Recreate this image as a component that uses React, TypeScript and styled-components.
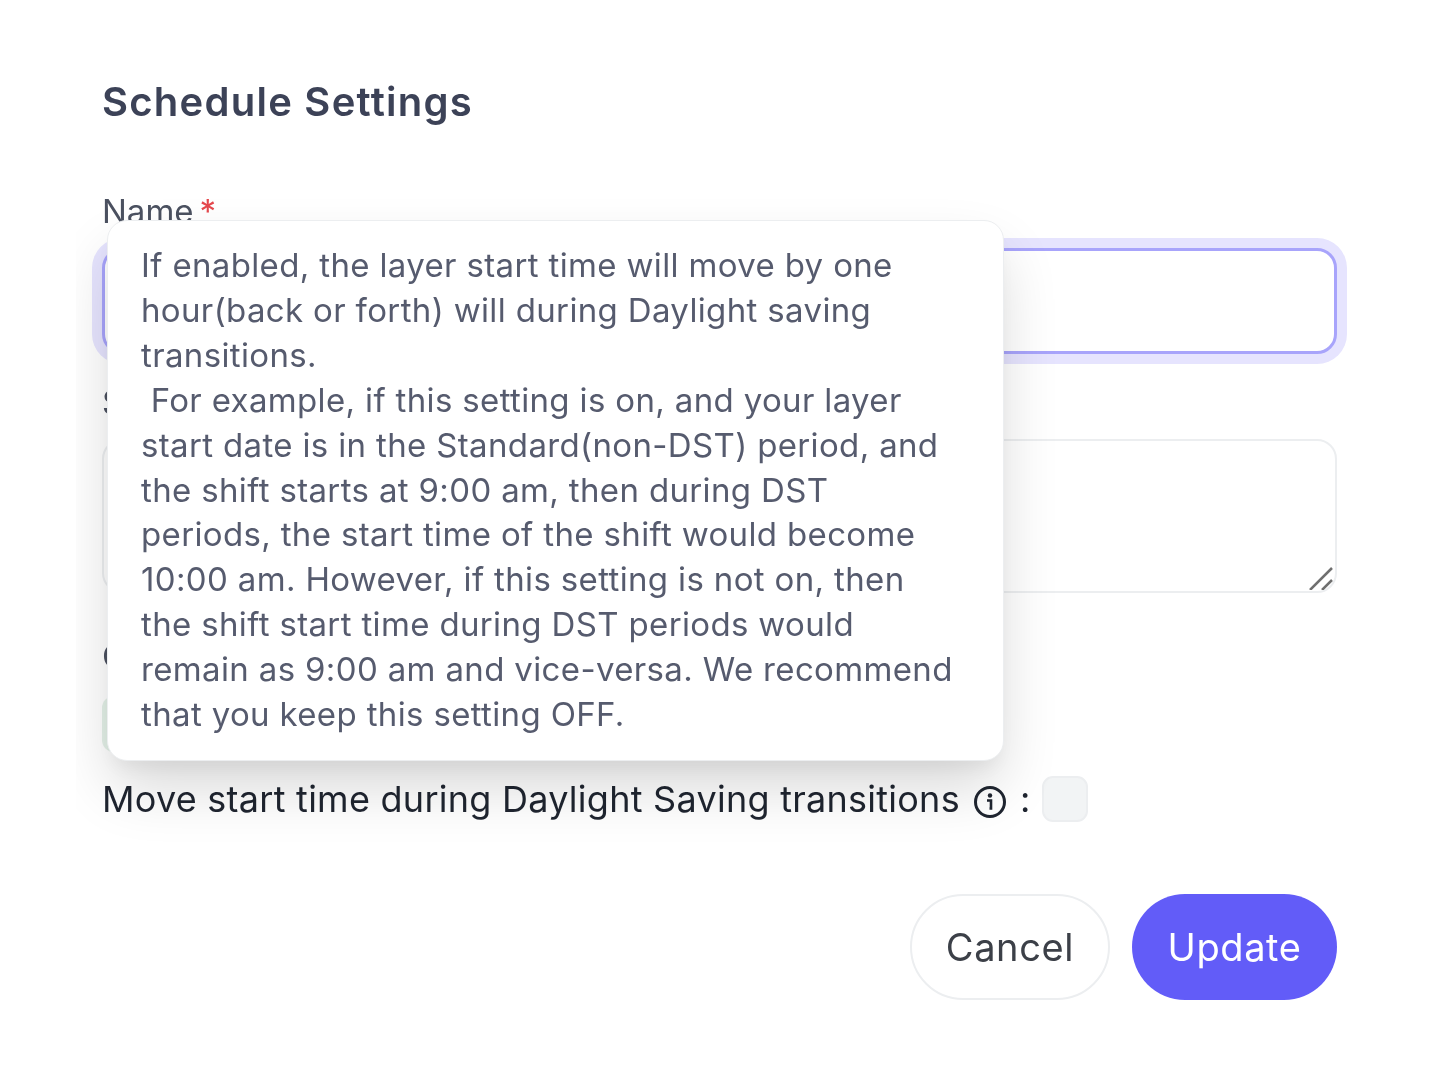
import React from "react";
import styled, {createGlobalStyle} from "styled-components";

const GlobalStyle = createGlobalStyle`
  html, body {
    margin: 0;
    padding: 0;
    background: #ffffff;
    font-family: Inter, "Liberation Sans", sans-serif;
  }
`;

const Page = styled.div`
  width: 1432px;
  height: 1080px;
  overflow: hidden;
  background: #ffffff;
  filter: blur(0.5px);
`;

const Sheet = styled.div`
  position: relative;
  margin-left: 76px;
  width: 1356px;
  height: 1080px;
  padding: 78px 95px 0 26px;
  box-sizing: border-box;
  overflow: hidden;
  display: flex;
  flex-direction: column;
`;

const Title = styled.h2`
  margin: 0 0 65px;
  font-size: 40px;
  line-height: 48px;
  font-weight: 600;
  letter-spacing: 1.25px;
  color: #3c4257;
`;

const Label = styled.label`
  display: block;
  font-size: 33px;
  line-height: 40px;
  color: #4b5160;
`;

const Star = styled.span`
  color: #e5484d;
  margin-left: 6px;
`;

const NameInput = styled.input`
  display: block;
  box-sizing: border-box;
  width: 100%;
  height: 106px;
  margin: 17px 0 28px;
  border: 3px solid #a8a4fb;
  border-radius: 20px;
  box-shadow: 0 0 0 10px #e6e4fe;
  outline: none;
  background: #ffffff;
`;

const AreaWrap = styled.div`
  position: relative;
  height: 154px;
  margin: 17px 0 43px;
`;

const Area = styled.textarea`
  display: block;
  box-sizing: border-box;
  width: 100%;
  height: 100%;
  border: 2px solid #eceef0;
  border-radius: 20px;
  outline: none;
  resize: none;
  background: transparent;
`;

const Grip = styled.svg`
  position: absolute;
  right: 3px;
  bottom: 3px;
`;

const Swatch = styled.div`
  width: 60px;
  height: 56px;
  margin: 20px 0 24px;
  border-radius: 12px;
  background: #e4f1e8;
`;

const DstRow = styled.div`
  display: flex;
  align-items: center;
  height: 46px;
  font-size: 36px;
  letter-spacing: 0.26px;
  color: #1f2530;
`;

const InfoIcon = styled.svg`
  margin: 5px 0 0 13px;
`;

const Colon = styled.span`
  margin: 0 11px 0 13px;
`;

const Check = styled.div`
  box-sizing: border-box;
  width: 46px;
  height: 46px;
  border: 2px solid #eceef0;
  border-radius: 11px;
  background: #f2f4f5;
`;

const Actions = styled.div`
  display: flex;
  justify-content: flex-end;
  gap: 22px;
  margin-top: 72px;
`;

const Button = styled.button<{ $primary?: boolean }>`
  box-sizing: border-box;
  height: 106px;
  padding: 0 ${props => props.$primary ? "35.5px" : "34px"};
  border-radius: 53px;
  border: ${props => props.$primary ? "none" : "2px solid #eceef0"};
  background: ${props => props.$primary ? "#625cf8" : "#ffffff"};
  color: ${props => props.$primary ? "#ffffff" : "#3c4048"};
  font-family: inherit;
  font-size: 38px;
  letter-spacing: 0.6px;
`;

const Tooltip = styled.div`
  position: absolute;
  left: 31px;
  top: 220px;
  box-sizing: border-box;
  width: 897px;
  height: 541px;
  padding: 22px 33px;
  border: 1px solid #eceef0;
  border-radius: 20px;
  background: #ffffff;
  box-shadow: 0 30px 60px -5px rgba(0, 0, 0, 0.16), 0 12px 18px -6px rgba(0, 0, 0, 0.05);
  font-size: 33px;
  line-height: 44.9px;
  letter-spacing: 0.35px;
  color: #565b6e;
  white-space: pre-wrap;
`;

const tooltipText = `If enabled, the layer start time will move by one
hour(back or forth) will during Daylight saving
transitions.
 For example, if this setting is on, and your layer
start date is in the Standard(non-DST) period, and
the shift starts at 9:00 am, then during DST
periods, the start time of the shift would become
10:00 am. However, if this setting is not on, then
the shift start time during DST periods would
remain as 9:00 am and vice-versa. We recommend
that you keep this setting OFF.`;

export default function App() {
    return (
        <Page>
            <GlobalStyle/>
            <Sheet>
                <Title>Schedule Settings</Title>
                <Label>Name<Star>*</Star></Label>
                <NameInput/>
                <Label>Summary</Label>
                <AreaWrap>
                    <Area/>
                    <Grip width="26" height="26" viewBox="0 0 26 26">
                        <path d="M2 26L24 4M14 26L24 16" stroke="#6f6f6f" strokeWidth="2.5" fill="none"/>
                    </Grip>
                </AreaWrap>
                <Label>Color</Label>
                <Swatch/>
                <DstRow>
                    Move start time during Daylight Saving transitions
                    <InfoIcon width="34" height="34" viewBox="0 0 34 34">
                        <circle cx="17" cy="17" r="14.5" stroke="#1f2530" strokeWidth="3" fill="none"/>
                        <circle cx="17" cy="10.5" r="2.2" fill="#1f2530"/>
                        <path d="M14 15.5h4v8h-1.5" stroke="#1f2530" strokeWidth="2.6" fill="none"/>
                    </InfoIcon>
                    <Colon>:</Colon>
                    <Check/>
                </DstRow>
                <Actions>
                    <Button>Cancel</Button>
                    <Button $primary>Update</Button>
                </Actions>
                <Tooltip>{tooltipText}</Tooltip>
            </Sheet>
        </Page>
    )
}
